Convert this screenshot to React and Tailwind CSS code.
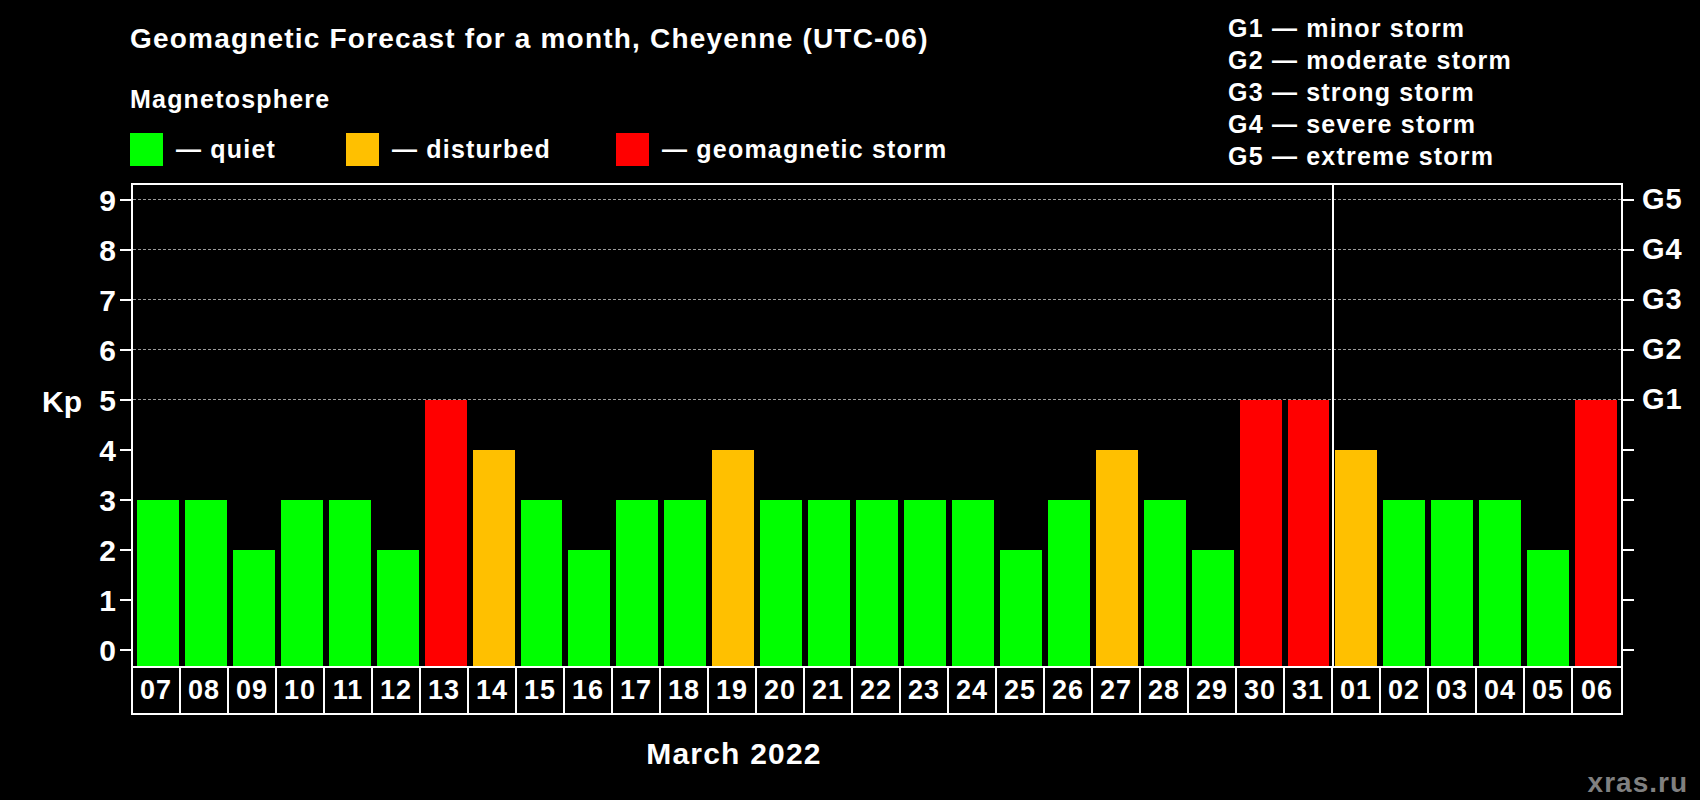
const days = [
  ["07", 3], ["08", 3], ["09", 2], ["10", 3], ["11", 3], ["12", 2], ["13", 5], ["14", 4],
  ["15", 3], ["16", 2], ["17", 3], ["18", 3], ["19", 4], ["20", 3], ["21", 3], ["22", 3],
  ["23", 3], ["24", 3], ["25", 2], ["26", 3], ["27", 4], ["28", 3], ["29", 2], ["30", 5],
  ["31", 5], ["01", 4], ["02", 3], ["03", 3], ["04", 3], ["05", 2], ["06", 5],
];

const barColor = (v) => (v >= 5 ? "bg-[#ff0000]" : v === 4 ? "bg-[#ffc000]" : "bg-[#00ff00]");
const yOf = (v) => 16 + v * 50; // px from plot inner bottom
const G = { 5: "G1", 6: "G2", 7: "G3", 8: "G4", 9: "G5" };

export default function App() {
  const font = { fontFamily: '"Liberation Sans", Arial, sans-serif' };
  return (
    <div className="min-h-screen w-[1700px] h-[800px] bg-black text-white font-bold overflow-hidden" style={font}>
      {/* Header */}
      <div className="flex h-[183px]">
        <div className="w-[1228px] pl-[130px] pt-[22px] tracking-[1.2px]">
          <div className="text-[28px] leading-[34px]">Geomagnetic Forecast for a month, Cheyenne (UTC-06)</div>
          <div className="text-[25px] leading-[32px] mt-[27px]">Magnetosphere</div>
          <div className="flex items-center mt-[16px] text-[25px]">
            <div className="w-[33px] h-[33px] bg-[#00ff00]" />
            <span className="ml-[13px] w-[170px]">— quiet</span>
            <div className="w-[33px] h-[33px] bg-[#ffc000]" />
            <span className="ml-[13px] w-[224px]">— disturbed</span>
            <div className="w-[33px] h-[33px] bg-[#ff0000]" />
            <span className="ml-[13px]">— geomagnetic storm</span>
          </div>
        </div>
        <div className="pt-[12px] text-[25px] leading-[32px] tracking-[1.2px]">
          <div>G1 — minor storm</div>
          <div>G2 — moderate storm</div>
          <div>G3 — strong storm</div>
          <div>G4 — severe storm</div>
          <div>G5 — extreme storm</div>
        </div>
      </div>

      {/* Chart */}
      <div className="flex">
        <div className="relative w-[131px] h-[485px]">
          <div className="absolute left-[42px] top-[196px] text-[30px]">Kp</div>
          {[0, 1, 2, 3, 4, 5, 6, 7, 8, 9].map((v) => (
            <div key={v} className="absolute right-0 flex items-center h-[30px]" style={{ bottom: yOf(v) + 2 - 15 }}>
              <span className="text-[30px] mr-[15px]">{v}</span>
              <div className="absolute right-0 w-[11px] h-[2px] bg-white" />
            </div>
          ))}
        </div>
        <div className="relative w-[1492px] h-[485px] border-2 border-white">
          {[5, 6, 7, 8, 9].map((v) => (
            <div key={v} className="absolute left-0 right-0 border-t border-dashed border-[#9a9a9a]" style={{ bottom: yOf(v) }} />
          ))}
          <div className="absolute top-0 bottom-0 left-[1199px] w-[2px] bg-white" />
          <div className="absolute inset-0 flex items-end gap-[6px] px-[4px]">
            {days.map(([d, v], i) => (
              <div key={i} className={`w-[42px] ${barColor(v)}`} style={{ height: yOf(v) }} />
            ))}
          </div>
        </div>
        <div className="relative w-[77px] h-[485px]">
          {[0, 1, 2, 3, 4, 5, 6, 7, 8, 9].map((v) => (
            <div key={v} className="absolute left-0 flex items-center h-[30px]" style={{ bottom: yOf(v) + 2 - 15 }}>
              <div className="w-[11px] h-[2px] bg-white" />
              {G[v] && <span className="text-[29px] ml-[8px] tracking-[1px]">{G[v]}</span>}
            </div>
          ))}
        </div>
      </div>

      {/* Dates */}
      <div className="ml-[131px] w-[1492px] flex border-2 border-t-0 border-white">
        {days.map(([d], i) => (
          <div key={i} className={`w-[48px] h-[45px] flex items-center justify-center text-[27px] tracking-[1px] ${i < days.length - 1 ? "border-r-2 border-white" : ""}`}>
            {d}
          </div>
        ))}
      </div>

      <div className="flex mt-[16px]">
        <div className="w-[1468px] text-center text-[30px] tracking-[1.2px]">March 2022</div>
      </div>
      <div className="flex justify-end pr-[12px] mt-[-14px]">
        <span className="text-[28px] text-[#808080] tracking-[1px]">xras.ru</span>
      </div>
    </div>
  );
}
